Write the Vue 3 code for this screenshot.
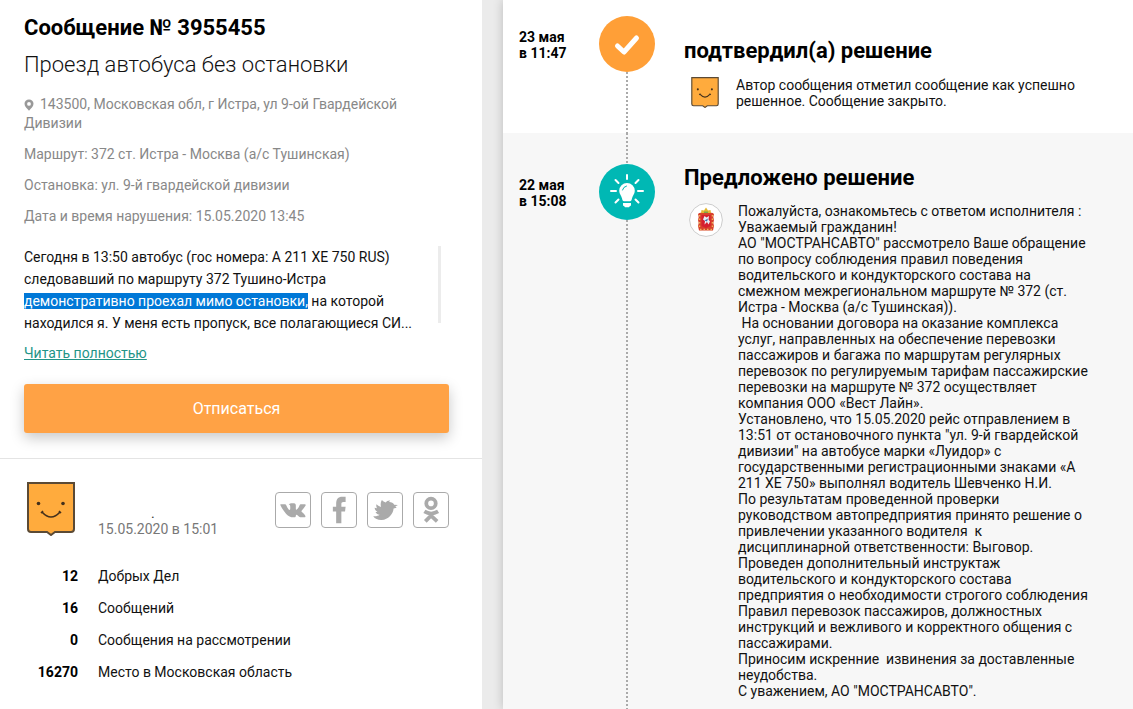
<script setup>
const details = [
  'Маршрут: 372 ст. Истра - Москва (а/с Тушинская)',
  'Остановка: ул. 9-й гвардейской дивизии',
  'Дата и время нарушения: 15.05.2020 13:45',
]

const stats = [
  { value: '12', label: 'Добрых Дел' },
  { value: '16', label: 'Сообщений' },
  { value: '0', label: 'Сообщения на рассмотрении' },
  { value: '16270', label: 'Место в Московская область' },
]

const reply = [
  'Пожалуйста, ознакомьтесь с ответом исполнителя :',
  'Уважаемый гражданин!',
  'АО "МОСТРАНСАВТО" рассмотрело Ваше обращение по вопросу соблюдения правил поведения водительского и кондукторского состава на смежном межрегиональном маршруте № 372 (ст. Истра - Москва (а/с Тушинская)).',
  ' На основании договора на оказание комплекса услуг, направленных на обеспечение перевозки пассажиров и багажа по маршрутам регулярных перевозок по регулируемым тарифам пассажирские перевозки на маршруте № 372 осуществляет компания ООО «Вест Лайн».',
  'Установлено, что 15.05.2020 рейс отправлением в 13:51 от остановочного пункта "ул. 9-й гвардейской дивизии" на автобусе марки «Луидор» с государственными регистрационными знаками «А 211 ХЕ 750» выполнял водитель Шевченко Н.И.',
  'По результатам проведенной проверки руководством автопредприятия принято решение о привлечении указанного водителя  к дисциплинарной ответственности: Выговор.',
  'Проведен дополнительный инструктаж водительского и кондукторского состава предприятия о необходимости строгого соблюдения Правил перевозок пассажиров, должностных инструкций и вежливого и корректного общения с пассажирами.',
  'Приносим искренние  извинения за доставленные неудобства.',
  'С уважением, АО "МОСТРАНСАВТО".',
]
</script>

<template>
  <div class="page">
    <aside class="card">
      <section class="message">
        <h1>Сообщение № 3955455</h1>
        <h2>Проезд автобуса без остановки</h2>
        <div class="details">
          <p>
            <svg class="pin" viewBox="0 0 10 12" aria-hidden="true">
              <path fill-rule="evenodd" d="M5 .5C2.400 .5 .5 2.400 .5 4.800c0 2.900 2.600 4.500 4.500 7 1.900-2.500 4.500-4.100 4.500-7C9.500 2.400 7.600.5 5 .5zm0 2.500a1.900 1.900 0 1 1 0 3.800 1.900 1.900 0 0 1 0-3.800z" />
            </svg>143500, Московская обл, г Истра, ул 9-ой Гвардейской Дивизии
          </p>
          <p v-for="d in details" :key="d">{{ d }}</p>
        </div>
        <div class="excerpt">
          <p>Сегодня в 13:50 автобус (гос номера: А 211 ХЕ 750 RUS) следовавший по маршруту 372 Тушино-Истра <mark>демонстративно проехал мимо остановки,</mark> на которой находился я. У меня есть пропуск, все полагающиеся СИ...</p>
        </div>
        <a class="more" href="#">Читать полностью</a>
        <button class="unsubscribe" type="button">Отписаться</button>
      </section>

      <section class="author">
        <div class="author-head">
          <svg class="face" viewBox="0 0 48 54" aria-hidden="true">
            <path d="M1 1H47V47Q47 50 44 50H28L24 53L20 50H4Q1 50 1 47Z" fill="#ffab3d" stroke="#5b4a35" stroke-width="2" />
            <circle cx="11.500" cy="21.500" r="1.800" fill="#44301c" />
            <circle cx="36" cy="21.500" r="1.800" fill="#44301c" />
            <path d="M15 30Q24 40 33 30M14 31l2-2M34 31l-2-2" fill="none" stroke="#44301c" stroke-width="1.600" />
          </svg>
          <div class="author-info">
            <span class="author-name">.</span>
            <time>15.05.2020 в 15:01</time>
          </div>
          <nav class="share">
            <a href="#" aria-label="ВКонтакте">
              <svg viewBox="0 0 36 36"><path d="M5 12h4.500q1 0 1.500 1.200c1 2.400 2.400 4.800 3.400 4.800.700 0 .700-1 .700-3 0-2-.300-2.500-1.600-2.800.700-1.100 2-1.400 4.200-1.400 2.600 0 3.300.500 3.300 2.500v3.700c0 .800.500 1.100 1 .600 1.200-1.200 2.300-3 3-4.700.300-.700.700-.900 1.400-.900h4.200c1.200 0 1 .800.400 1.800-1 1.800-2.300 3-3.700 4.800-.500.700-.400 1 .200 1.600 1.500 1.400 2.700 2.400 3.500 3.900.500.900 0 1.600-1.200 1.600h-4c-1 0-1.600-.500-2.500-1.500-1.200-1.300-2.100-1.700-2.300-.200-.100 1.200-.400 1.700-1.700 1.700-3.200.200-6-.500-8.500-3.500C8.400 19.400 6 16 4.600 12.800q-.400-.800.400-.800z" /></svg>
            </a>
            <a href="#" aria-label="Facebook">
              <svg viewBox="0 0 36 36"><path d="M15 32V19.500h-3.500v-5H15V11.500C15 6.500 17 4 21.500 4h3.500v5.500h-2.300c-1.700 0-2.200.8-2.200 2.300v2.700H25l-.6 5h-3.900V32z" /></svg>
            </a>
            <a href="#" aria-label="Twitter">
              <svg viewBox="0 0 36 36"><path d="M5.500 24.500c3 .300 5.300-.300 6.800-1.500-2.400-.300-3.700-1.500-4.300-3h2C8.200 19 7.200 17.500 7 15.700l2.500.5C8.800 15 8.500 13.500 9 12c1.600 1.500 3.200 2.500 4.900 2.900-.9-2.700-.6-5.200.8-7.400 1 1.200 2.400 2 4 2.500 1-1.400 2.600-2.300 4.800-2.100-.7.600-1 1-1 1.500 2.500 0 4.300 1 5.200 3l4 .4-2.800 1.600 1.500 1.300-3.300.6C26.500 22.500 21.500 28 14.500 28.500c-3.700.2-7-1.200-9-4z" /></svg>
            </a>
            <a href="#" aria-label="Одноклассники">
              <svg viewBox="0 0 36 36" class="outline"><circle cx="18" cy="11" r="5" /><path d="M11 19.500Q18 24 25.500 19.500M18 22v2.500M12 30L18 24l6.500 6" /></svg>
            </a>
          </nav>
        </div>
        <dl class="stats">
          <template v-for="s in stats" :key="s.label">
            <dt>{{ s.value }}</dt>
            <dd>{{ s.label }}</dd>
          </template>
        </dl>
      </section>
    </aside>

    <main class="timeline">
      <article class="entry accepted">
        <time>23 мая<br>в 11:47</time>
        <div class="rail">
          <svg class="badge" viewBox="0 0 56 56" aria-hidden="true">
            <circle cx="28" cy="28" r="28" fill="#ff9f37" />
            <path d="M18.500 30L25 36 37.500 22" fill="none" stroke="#fff" stroke-width="5" stroke-linecap="round" stroke-linejoin="round" />
          </svg>
        </div>
        <div class="content">
          <h2>подтвердил(а) решение</h2>
          <div class="reply">
            <svg class="face-small" viewBox="0 0 48 54" aria-hidden="true">
              <path d="M1 1H47V47Q47 50 44 50H28L24 53L20 50H4Q1 50 1 47Z" fill="#ffab3d" stroke="#5b4a35" stroke-width="2" />
              <circle cx="11.500" cy="21.500" r="1.800" fill="#44301c" />
              <circle cx="36" cy="21.500" r="1.800" fill="#44301c" />
              <path d="M15 30Q24 40 33 30M14 31l2-2M34 31l-2-2" fill="none" stroke="#44301c" stroke-width="2" />
            </svg>
            <p>Автор сообщения отметил сообщение как успешно решенное. Сообщение закрыто.</p>
          </div>
        </div>
      </article>

      <article class="entry proposed">
        <time>22 мая<br>в 15:08</time>
        <div class="rail">
          <svg class="badge" viewBox="0 0 56 56" aria-hidden="true">
            <circle cx="28" cy="28" r="28" fill="#00b8b4" />
            <g stroke="#fff" stroke-width="2" stroke-linecap="round">
              <path d="M28 11v4M12 27h5M39 27h5M16.500 16l3 3M39.500 16l-3 3M16.500 38.500l3-3M39.500 38.500l-3-3" />
            </g>
            <path d="M28 19a7.800 7.800 0 0 0-7.800 7.800c0 3.200 2.300 5 3 8.200.2 1.400.6 2.200 1.800 2.200h6c1.200 0 1.600-.8 1.800-2.200.7-3.200 3-5 3-8.200A7.800 7.800 0 0 0 28 19z" fill="#fff" />
            <path d="M23.500 26q.7-3.200 4-4" fill="none" stroke="#00b8b4" stroke-width="1" stroke-linecap="round" />
            <path d="M24 39h8v2.500q-1.500.5-2 1.800h-4q-.5-1.300-2-1.800z" fill="#fff" />
          </svg>
        </div>
        <div class="content">
          <h2>Предложено решение</h2>
          <div class="reply">
            <svg class="emblem" viewBox="0 0 34 34" aria-hidden="true">
              <circle cx="17" cy="17" r="16.400" fill="#fff" stroke="#ccc" />
              <path d="M12 10l.5-3 2.500.5L17 4.500l2 3 2.500-.5.5 3z" fill="#e3b62f" />
              <path d="M15 8.500h4v1.500h-4z" fill="#7fa34a" />
              <path d="M9 11q2-2 4-1h8q2-1 4 1l-.7 3 .7 3-.7 3 .7 3-1 4.500h-14L9 23l.7-3L9 17l.7-3z" fill="#d8402c" />
              <path d="M10.500 12v14M23.500 12v14M11 26.500h12" fill="none" stroke="#efb25a" stroke-width="1.500" stroke-dasharray="1.500 2" />
              <path d="M12.500 12h9v11l-4.500 2-4.500-2z" fill="#d51f2e" />
              <path d="M14 16.500l1.500-3.500 2 1.500L20 13l-.5 3.500 1.500 2-1.500 3-1.500-2.500-2.500 2.500.5-3.500z" fill="#e9eef5" />
              <path d="M15.500 17.500l2.500 1 1-3z" fill="#3e6fae" />
            </svg>
            <div>
              <p v-for="(line, i) in reply" :key="i">{{ line }}</p>
            </div>
          </div>
        </div>
      </article>
    </main>
  </div>
</template>

<style>
body {
  margin: 0;
  background: #ebebeb;
}
</style>

<style scoped>
.page {
  display: grid;
  grid-template-columns: 482fr 630fr;
  gap: 21px;
  min-height: 100vh;
  font: 14px/16px Roboto, "Liberation Sans", sans-serif;
  color: #111;
  background: #ebebeb;
}
h1, h2, p, dl, dd {
  margin: 0;
}
.card {
  background: #fff;
}
.message {
  padding: 14px 33px 25px 24px;
  border-bottom: 1px solid #e4e4e4;
}
h1 {
  font-size: 22px;
  line-height: 28px;
  font-weight: 700;
  color: #000;
}
.message h2 {
  margin-top: 8px;
  font-size: 22px;
  line-height: 30px;
  font-weight: 300;
  color: #111;
}
.details {
  display: grid;
  gap: 12px;
  margin-top: 15px;
  padding-right: 40px;
  line-height: 19px;
  color: #888;
}
.pin {
  width: 10px;
  height: 12px;
  margin-right: 6px;
  vertical-align: -2px;
  fill: #999;
}
.excerpt {
  margin: 20px 8px 0 0;
  padding-right: 20px;
  border-right: 3px solid #ececec;
  height: 77px;
  line-height: 22px;
}
mark {
  background: #0078d7;
  color: #fff;
}
.more {
  display: block;
  width: fit-content;
  margin-top: 22px;
  color: #239487;
}
.unsubscribe {
  display: block;
  width: 100%;
  height: 49px;
  margin-top: 23px;
  border: 0;
  border-radius: 3px;
  background: #ffa245;
  color: #fff;
  font: 16px/20px Roboto, sans-serif;
  box-shadow: 0 5px 14px rgba(0, 0, 0, 0.22);
}
.author {
  padding: 23px 33px 22px 27px;
}
.author-head {
  display: flex;
  align-items: flex-start;
}
.face {
  width: 48px;
  height: 54px;
}
.author-info {
  display: grid;
  flex: 1;
  margin: 23px 0 0 23px;
  color: #777;
}
.author-name {
  padding-left: 53px;
  color: #333;
}
.share {
  display: flex;
  gap: 10px;
  margin-top: 10px;
}
.share a {
  box-sizing: border-box;
  width: 36px;
  height: 36px;
  border: 1px solid #aaa;
  border-radius: 4px;
}
.share svg {
  display: block;
  width: 34px;
  height: 34px;
  fill: #aaa;
}
.share .outline {
  fill: none;
  stroke: #aaa;
  stroke-width: 4;
}
.stats {
  display: grid;
  grid-template-columns: 51px 1fr;
  gap: 16px 20px;
  margin-top: 31px;
}
.stats dt {
  text-align: right;
  font-weight: 700;
  color: #000;
}
.timeline {
  display: grid;
  grid-template-rows: auto 1fr;
  background: #f7f7f7;
  box-shadow: 0 0 10px rgba(0, 0, 0, 0.2);
}
.entry {
  display: grid;
  grid-template-columns: 80px 56px 1fr;
  padding-left: 16px;
}
.entry > time {
  padding-top: 29px;
  font-weight: 700;
  color: #000;
}
.accepted {
  background: #fff;
}
.rail {
  display: flex;
  flex-direction: column;
  align-items: center;
  padding-top: 16px;
}
.proposed > time {
  padding-top: 44px;
}
.proposed .rail {
  padding-top: 0;
}
.badge {
  width: 56px;
  height: 56px;
  flex: none;
}
.rail::after,
.proposed .rail::before {
  content: "";
  flex: 1;
  width: 2px;
  background: repeating-linear-gradient(#aaa 0 2px, transparent 2px 4px);
}
.proposed .rail::before {
  flex: 0 0 31px;
}
.content {
  padding: 37px 40px 24px 29px;
}
.proposed .content {
  padding: 31px 40px 10px 29px;
}
.content h2 {
  font-size: 22px;
  line-height: 28px;
  font-weight: 700;
  color: #000;
}
.reply {
  display: flex;
  align-items: flex-start;
  margin-top: 12px;
}
.proposed .reply {
  margin-top: 11px;
}
.reply p {
  white-space: pre-wrap;
}
.face-small {
  flex: none;
  width: 28px;
  height: 31px;
  margin: 0 17px 0 7px;
}
.emblem {
  flex: none;
  width: 34px;
  height: 34px;
  margin: 0 15px 0 5px;
}
</style>
